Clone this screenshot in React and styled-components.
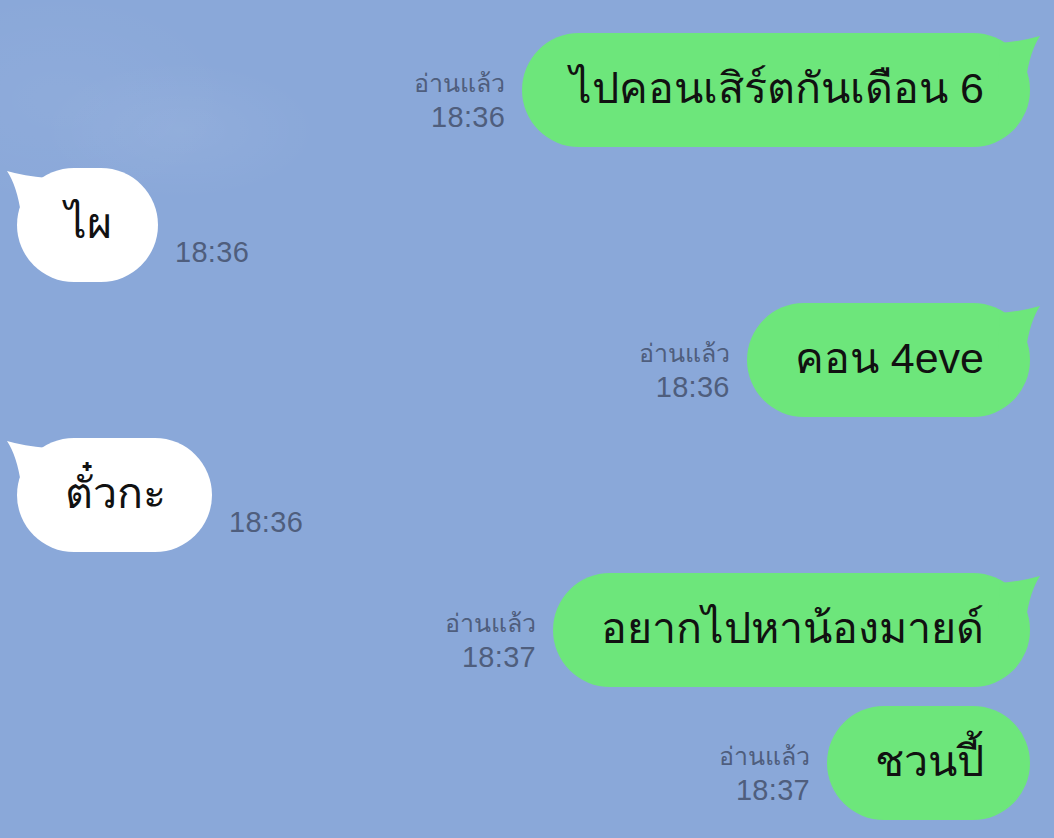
import styled, { createGlobalStyle } from 'styled-components'

const GlobalStyle = createGlobalStyle`
  html, body {
    margin: 0;
    padding: 0;
    background: #8aa8d9;
  }
  body {
    font-family: "Liberation Sans", "Noto Sans", "DejaVu Sans", sans-serif;
  }
`

const Chat = styled.div`
  width: 1054px;
  height: 838px;
  overflow: hidden;
  box-sizing: border-box;
  padding: 33px 24px 0 17px;
  display: flex;
  flex-direction: column;
  gap: 21px;
  background:
    radial-gradient(ellipse 140px 70px at 180px 130px, rgba(255, 255, 255, 0.06), transparent),
    radial-gradient(ellipse 180px 110px at 60px 100px, rgba(255, 255, 255, 0.04), transparent),
    #8aa8d9;
`

const Row = styled.div`
  display: flex;
  flex-direction: ${(p) => (p.$out ? 'row-reverse' : 'row')};
  align-items: flex-end;
  gap: 17px;
  margin-top: ${(p) => (p.$cont ? '-2px' : '0')};
`

const Bubble = styled.div`
  position: relative;
  height: 114px;
  box-sizing: border-box;
  padding: 0 46px 4px 48px;
  border-radius: 57px;
  display: flex;
  align-items: center;
  background: ${(p) => (p.$out ? '#6de67b' : '#ffffff')};
  color: #111;
  font-size: 43px;
  white-space: nowrap;
`

const Tail = styled.svg`
  position: absolute;
  top: 0;
  width: 44px;
  height: 50px;
  ${(p) => (p.$out ? 'right: -12px;' : 'left: -12px; transform: scaleX(-1);')}
`

const Meta = styled.div`
  display: flex;
  flex-direction: column;
  align-items: ${(p) => (p.$out ? 'flex-end' : 'flex-start')};
  margin-bottom: 13px;
  color: #4f5e7d;
`

const Read = styled.span`
  font-size: 25px;
  line-height: 34px;
`

const Time = styled.span`
  font-size: 29px;
  line-height: 34px;
  letter-spacing: 0.3px;
`

function Message({ out, text, time, tail = true, cont }) {
  return (
    <Row $out={out} $cont={cont}>
      <Bubble $out={out}>
        {tail && (
          <Tail $out={out} viewBox="0 0 44 50">
            <path
              d="M2 10 Q25 8 42 3 Q32 18 28 46 L0 46 Z"
              fill={out ? '#6de67b' : '#ffffff'}
            />
          </Tail>
        )}
        {text}
      </Bubble>
      <Meta $out={out}>
        {out && <Read>อ่านแล้ว</Read>}
        <Time>{time}</Time>
      </Meta>
    </Row>
  )
}

const messages = [
  { out: true, text: 'ไปคอนเสิร์ตกันเดือน 6', time: '18:36' },
  { out: false, text: 'ไผ', time: '18:36' },
  { out: true, text: 'คอน 4eve', time: '18:36' },
  { out: false, text: 'ตั๋วกะ', time: '18:36' },
  { out: true, text: 'อยากไปหาน้องมายด์', time: '18:37' },
  { out: true, text: 'ชวนปี้', time: '18:37', tail: false, cont: true },
]

export default function App() {
  return (
    <>
      <GlobalStyle />
      <Chat>
        {messages.map((m, i) => (
          <Message key={i} {...m} />
        ))}
      </Chat>
    </>
  )
}
